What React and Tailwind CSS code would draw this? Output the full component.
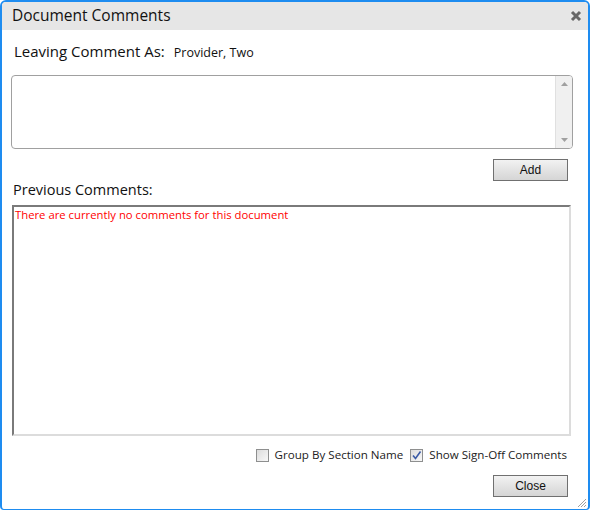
import React, { useState } from 'react';

const UI_FONT = { fontFamily: '"Open Sans", "Noto Sans", sans-serif' };
const BTN_FONT = { fontFamily: '"Liberation Sans", Arial, sans-serif' };

function Checkbox({ checked, onChange, label }) {
  return (
    <label className="flex items-center gap-[6px] cursor-pointer select-none">
      <span
        onClick={onChange}
        className="w-[13px] h-[13px] border border-[#8e8f8f] bg-gradient-to-br from-[#dcdcdc] to-[#f8f8f8] flex items-center justify-center"
      >
        {checked && (
          <svg width="11" height="11" viewBox="0 0 11 11">
            <path d="M2 5.5 L4.5 8.5 L9.5 1.5" stroke="#3a5aa6" strokeWidth="1.6" fill="none" />
          </svg>
        )}
      </span>
      <span className="text-[11.6px] leading-[16px] text-[#222]">{label}</span>
    </label>
  );
}

function WinButton({ children, onClick }) {
  return (
    <button
      onClick={onClick}
      style={BTN_FONT}
      className="w-[75px] h-[22px] border border-[#707070] bg-gradient-to-b from-[#f2f2f2] to-[#d5d5d5] text-[12px] font-normal text-[#111]"
    >
      {children}
    </button>
  );
}

export default function App() {
  const [comment, setComment] = useState('');
  const [grouped, setGrouped] = useState(false);
  const [signOff, setSignOff] = useState(true);

  return (
    <div className="w-[590px] h-[510px] bg-white" style={UI_FONT}>
      <div className="w-full h-full border-2 border-b border-[#1e8cf0] rounded-t-[6px] rounded-b-[4px] flex flex-col relative overflow-hidden">
        {/* Title bar */}
        <div className="h-[28px] bg-[#e6e6e6] flex items-center justify-between pl-[10px] pr-[6px] pb-[3px]">
          <span className="text-[15.5px] leading-[20px] text-[#111]">Document Comments</span>
          <svg width="12" height="12" viewBox="0 0 12 12" className="mt-[2px]">
            <path d="M2 2 L10 10 M10 2 L2 10" stroke="#666" strokeWidth="3" />
          </svg>
        </div>

        <div className="flex flex-col px-[9px] pt-[11px]">
          <div className="flex items-baseline gap-[9px] pl-[3px] leading-[20px]">
            <span className="text-[15px] text-[#111]">Leaving Comment As:</span>
            <span className="text-[12.5px] text-[#111]">Provider, Two</span>
          </div>

          {/* Comment input */}
          <div className="mt-[12px] h-[74px] w-[562px] border border-[#a0a0a0] rounded-[4px] flex overflow-hidden">
            <textarea
              value={comment}
              onChange={e => setComment(e.target.value)}
              className="flex-1 resize-none outline-none text-[12px] p-1"
            />
            <div className="w-[17px] bg-[#f0f0f0] border-l border-[#e0e0e0] flex flex-col items-center justify-between py-[6px]">
              <svg width="7" height="4" viewBox="0 0 7 4"><path d="M0 4 L3.5 0 L7 4 Z" fill="#a0a0a0" /></svg>
              <svg width="7" height="4" viewBox="0 0 7 4"><path d="M0 0 L3.5 4 L7 0 Z" fill="#a0a0a0" /></svg>
            </div>
          </div>

          <div className="flex justify-end pr-[11px] mt-[10px]">
            <WinButton onClick={() => setComment('')}>Add</WinButton>
          </div>

          <div className="pl-[2px] -mt-[1px] text-[14.5px] leading-[20px] text-[#111]">Previous Comments:</div>

          {/* Previous comments list */}
          <div className="mt-[5px] ml-[1px] h-[231px] w-[559px] border-2 border-t-[#7a7a7a] border-l-[#7a7a7a] border-r-[#dcdcdc] border-b-[#dcdcdc] bg-white px-[1px] text-[11.3px] leading-[15px] text-[#ff0000]">
            There are currently no comments for this document
          </div>

          <div className="flex justify-end items-center gap-[7px] pr-[12px] mt-[11px]">
            <Checkbox checked={grouped} onChange={() => setGrouped(!grouped)} label="Group By Section Name" />
            <Checkbox checked={signOff} onChange={() => setSignOff(!signOff)} label="Show Sign-Off Comments" />
          </div>

          <div className="flex justify-end pr-[11px] mt-[12px]">
            <WinButton>Close</WinButton>
          </div>
        </div>

        {/* Resize grip */}
        <svg className="absolute right-[1px] bottom-[1px]" width="10" height="10" viewBox="0 0 10 10">
          <path d="M9 1 L1 9 M9 4 L4 9 M9 7 L7 9" stroke="#a0a0a0" strokeWidth="1" />
        </svg>
      </div>
    </div>
  );
}
